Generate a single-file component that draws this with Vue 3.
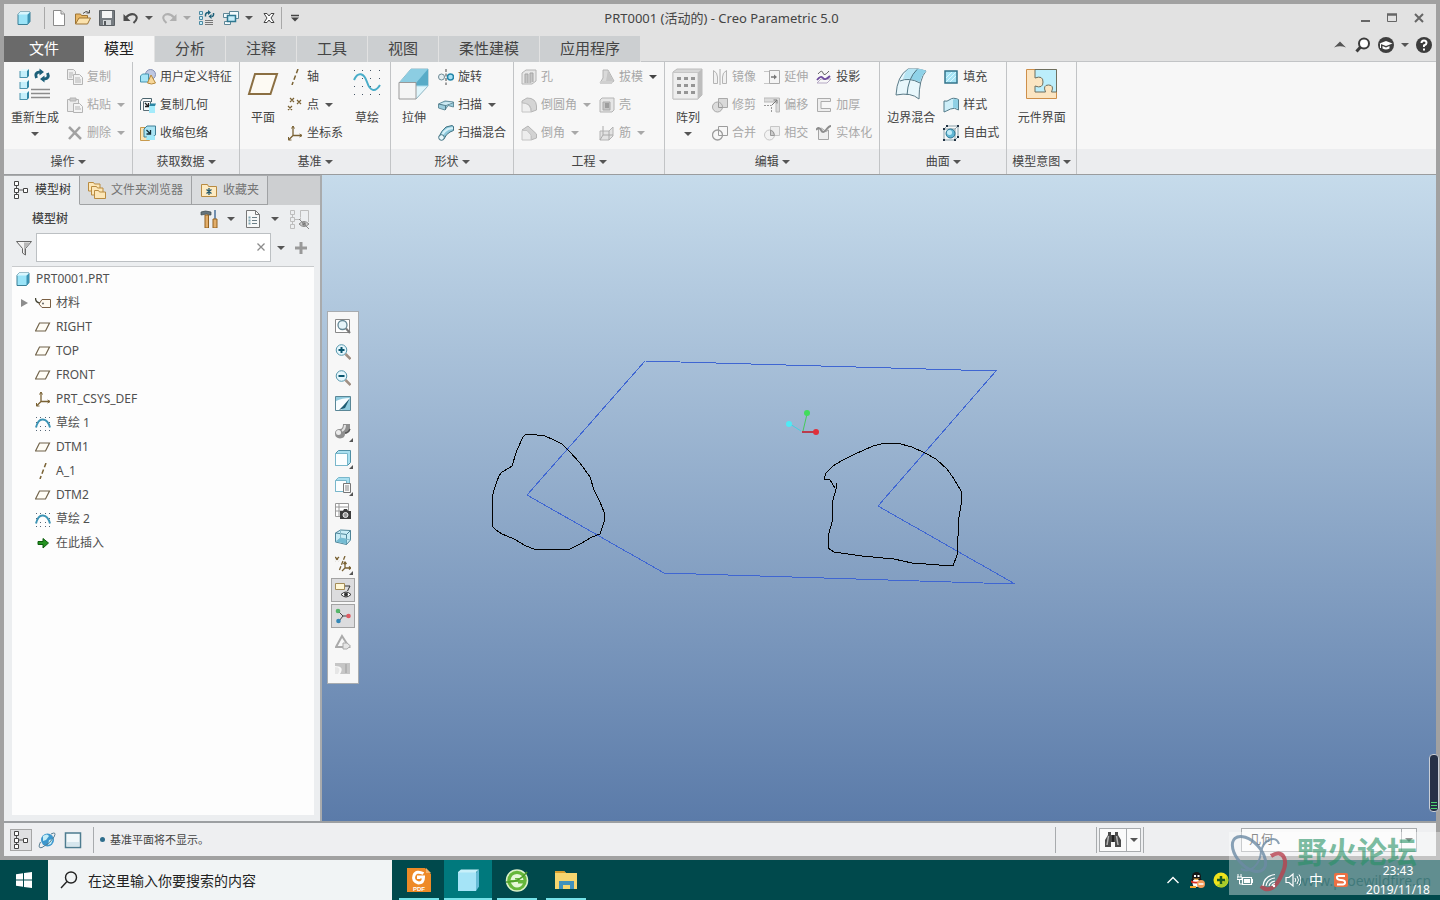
<template>
  <div class="desktop">
    <div class="window">
      <header class="title-bar">
        <div class="quick-access">
          <Icon name="cube" />
          <span class="divider"></span>
          <template v-for="item in quickItems" :key="item.icon">
            <button class="plain" :aria-label="item.label" :class="{ disabled: item.disabled }">
              <Icon :name="item.icon" />
              <span class="caret" v-if="item.menu"></span>
            </button>
          </template>
          <span class="divider last"></span>
          <button class="plain" aria-label="自定义"><Icon name="customize" /></button>
        </div>
        <h1>PRT0001 (活动的) - Creo Parametric 5.0</h1>
        <div class="window-buttons">
          <button class="plain" aria-label="最小化"><Icon name="minimize" /></button>
          <button class="plain" aria-label="最大化"><Icon name="maximize" /></button>
          <button class="plain" aria-label="关闭"><Icon name="close" /></button>
        </div>
      </header>

      <nav class="ribbon-tabs">
        <button
          v-for="tab in tabs"
          :key="tab"
          class="ribbon-tab"
          :class="{ file: tab === '文件', active: tab === activeTab }"
          @click="activeTab = tab"
        >
          {{ tab }}
        </button>
        <div class="ribbon-tools">
          <button class="plain" aria-label="折叠"><Icon name="collapse" /></button>
          <button class="plain" aria-label="搜索"><Icon name="lens" /></button>
          <button class="plain" aria-label="学习"><Icon name="learn" /></button>
          <span class="caret"></span>
          <button class="plain" aria-label="帮助"><Icon name="help" /></button>
        </div>
      </nav>

      <section class="ribbon">
        <div class="group" v-for="group in groups" :key="group.title">
          <div class="group-body">
            <template v-for="(part, i) in group.parts" :key="i">
              <button class="big" v-if="part.icon" :class="{ disabled: part.disabled }">
                <Icon :name="part.icon" :size="32" />
                <span class="big-label">{{ part.label }}</span>
                <span class="caret" v-if="part.menu"></span>
              </button>
              <div class="column" v-else>
                <button
                  class="small"
                  v-for="cmd in part"
                  :key="cmd.label"
                  :class="{ disabled: cmd.off, 'dark-caret': cmd.darkCaret }"
                >
                  <Icon :name="cmd.icon" />
                  <span>{{ cmd.label }}</span>
                  <span class="caret" v-if="cmd.menu"></span>
                </button>
              </div>
            </template>
          </div>
          <button class="group-title">{{ group.title }}<span class="caret"></span></button>
        </div>
        <div class="ribbon-rest"></div>
      </section>

      <main class="workspace">
        <aside class="navigator">
          <div class="nav-tabs">
            <button class="nav-tab active"><Icon name="tree" :size="18" />模型树</button>
            <button class="nav-tab"><Icon name="folders" :size="18" />文件夹浏览器</button>
            <button class="nav-tab"><Icon name="favorites" :size="18" />收藏夹</button>
          </div>
          <div class="nav-header">
            <h2>模型树</h2>
            <button class="plain" aria-label="设置"><Icon name="tools" :size="18" /></button>
            <span class="caret"></span>
            <button class="plain" aria-label="显示"><Icon name="list" :size="18" /></button>
            <span class="caret"></span>
            <button class="plain" aria-label="隐藏"><Icon name="treeHide" :size="22" /></button>
          </div>
          <div class="nav-filter">
            <Icon name="funnel" />
            <div class="filter-box">
              <input v-model="filter" type="text" aria-label="过滤" />
              <button class="plain clear" aria-label="清除" @click="filter = ''">
                <Icon name="clear" />
              </button>
            </div>
            <button class="plain slot" aria-label="过滤选项"><span class="caret"></span></button>
            <button class="plain slot" aria-label="添加"><Icon name="plus" /></button>
          </div>
          <ul class="tree">
            <li><Icon name="cube" /><span>PRT0001.PRT</span></li>
            <li v-for="node in nodes" :key="node.label" class="child">
              <span class="twisty"><i v-if="node.closed"></i></span>
              <Icon :name="node.icon" />
              <span>{{ node.label }}</span>
            </li>
          </ul>
        </aside>

        <div class="viewport">
          <svg class="scene">
            <g fill="none" shape-rendering="crispEdges">
              <path
                stroke="#3f66d2"
                d="M323 186 L674 196 L556 331 L693 409 L342 398 L205 320 Z"
              />
              <path
                stroke="#000"
                d="M204 259 L215 260 L223 261 L232 265 L240 269 L248 277 L258 288 L268 302 L272 315 L278 327 L282 337 L282 347 L278 359 L270 362 L258 369 L248 374 L235 374 L212 374 L204 371 L192 364 L180 359 L174 355 L170 351 L170 322 L174 309 L177 301 L180 297 L187 293 L190 291 L195 275 L201 262 Z"
              />
              <path
                stroke="#000"
                d="M515 308 L514 314 L511 325 L510 347 L507 358 L506 373 L512 377 L540 381 L572 384 L590 388 L617 390 L631 391 L635 380 L637 342 L639 330 L639 316 L632 304 L625 294 L614 284 L603 278 L590 272 L575 268 L563 268 L551 271 L533 279 L519 286 L511 291 L504 298 L502 304 L508 305 L513 313"
              />
            </g>
            <path stroke="#45cfe0" d="M468 249 L479 256" />
            <path stroke="#45c95c" d="M481 256 L485 239" />
            <path stroke="#b93c4c" stroke-width="2" d="M480 257 H494" />
            <circle cx="467" cy="249" r="3" fill="#4feaf5" />
            <circle cx="485" cy="238" r="3" fill="#41dd5c" />
            <circle cx="494" cy="257" r="3" fill="#e0303b" />
          </svg>
          <div class="view-tools">
            <button
              v-for="tool in viewTools"
              :key="tool.icon"
              :aria-label="tool.label"
              :class="{ pressed: tool.on, more: tool.menu }"
            >
              <Icon :name="tool.icon" />
            </button>
          </div>
        </div>
      </main>

      <footer class="status-bar">
        <button class="status-button pressed" aria-label="模型树"><Icon name="tree" :size="18" /></button>
        <button class="status-button" aria-label="浏览器"><Icon name="globe" :size="18" /></button>
        <button class="status-button" aria-label="全屏"><Icon name="screen" :size="18" /></button>
        <span class="bar"></span>
        <span class="bullet"></span>
        <p>基准平面将不显示。</p>
        <span class="bar spaced"></span>
        <span class="bar"></span>
        <div class="find">
          <button aria-label="查找"><Icon name="binoculars" :size="18" /></button>
          <button aria-label="查找选项"><span class="caret"></span></button>
        </div>
        <span class="bar"></span>
        <div class="pick">
          <select aria-label="选择过滤器">
            <option>几何</option>
          </select>
          <span class="pick-arrow"><span class="caret"></span></span>
        </div>
      </footer>
    </div>

    <div class="side-meter"><i></i><i></i><i></i></div>

    <div class="taskbar">
      <button class="start" aria-label="开始"><Icon name="windows" /></button>
      <label class="search">
        <Icon name="search" :size="18" />
        <input type="text" placeholder="在这里输入你要搜索的内容" />
      </label>
      <button class="task" aria-label="Foxit"><Icon name="foxit" :size="24" /></button>
      <button class="task current" aria-label="Creo"><Icon name="creo" :size="24" /></button>
      <button class="task" aria-label="浏览器"><Icon name="browser" :size="24" /></button>
      <button class="task" aria-label="资源管理器"><Icon name="explorer" :size="24" /></button>
      <div class="tray">
        <Icon name="trayUp" />
        <Icon name="penguin" />
        <Icon name="guard" />
        <Icon name="battery" />
        <Icon name="wifi" />
        <Icon name="volume" />
        <span class="ime">中</span>
        <Icon name="sogou" />
      </div>
      <div class="clock"><span>23:43</span><span>2019/11/18</span></div>
    </div>

    <div class="watermark">
      <svg viewBox="0 0 60 63" width="60" height="63" fill="none" stroke-width="3">
        <ellipse cx="20" cy="22" rx="12" ry="21" transform="rotate(-42 20 22)" stroke="#6d8ba5" />
        <path stroke="#6d8ba5" stroke-width="2" d="M50 12 C47 2 34 8 32 20 C31 32 22 42 12 37" />
        <path stroke="#b8424f" stroke-width="4" d="M42 24 C54 16 60 28 53 42 C48 54 40 62 32 54" />
      </svg>
      <div class="watermark-text"><b>野火论坛</b><span>www.proewildfire.cn</span></div>
    </div>
  </div>
</template>

<script setup>
import { ref, h } from 'vue'

const G = '#b4b4b4'
const T = '#7a6234'

const icons = {
  cube: `<path d="M2 4.500l2-2.500h10v9.500l-2.500 3H2z" fill="#9be4f8" stroke="#3b7f96"/><path d="M11.500 4.500L14 2v9.500l-2.500 3z" fill="#3b93b3"/><path d="M2 4.500l2-2.500h10l-2.500 2.500z" fill="#d9f6fd"/>`,
  newFile: `<path d="M2.500 .500h7.500l3.500 3.500v11.500h-11z" fill="#fff" stroke="#8b8b8b"/><path d="M10 .500V4h3.500" fill="#ddd" stroke="#8b8b8b"/>`,
  open: `<path d="M.500 14V4h5l1 1.500h6V8" fill="#e8b766" stroke="#9d7434"/><path d="M.500 14L4 8h11.500l-3 6z" fill="#fbe2ad" stroke="#9d7434"/><path d="M8 3.500Q11 0 14 2.500M14.500 0v3h-3" fill="none" stroke="#555"/>`,
  save: `<path d="M.500 .500h15v15H.500z" fill="#777d82" stroke="#5a5f63"/><path d="M3 1h10v7H3z" fill="#f5f5f5"/><path d="M4 10h8v5H4z" fill="#d2d6d8"/><path d="M5 11h2v4H5z" fill="#55595c"/>`,
  undo: `<path d="M3 7.500Q7 3 11.500 4.500Q16.500 7.500 10.500 13" fill="none" stroke="#4d4d4d" stroke-width="2"/><path d="M.500 4v7h7z" fill="#4d4d4d"/>`,
  redo: `<path d="M13 7.500Q9 3 4.500 4.500Q-.500 7.500 5.500 13" fill="none" stroke="#b0b0b0" stroke-width="2"/><path d="M15.500 4v7h-7z" fill="#b0b0b0"/>`,
  regenSmall: `<g fill="#c9effa" stroke="#4c8ba3"><path d="M.500 1.500h3v3h-3zM.500 6.500h3v3h-3zM.500 11.500h3v3h-3z"/></g><path d="M6 10.500h8M6 12.500h8M6 14.500h8" stroke="#777"/><path d="M6.500 6.500Q6 2.500 9.500 2.500M14.500 3Q15 6.500 12.500 6.500" fill="none" stroke="#1d6079" stroke-width="1.500"/><path d="M9 0v5l3-2.500zM12.500 4v5L9.500 6.500z" fill="#1d6079"/>`,
  windowsSwitch: `<path d="M6.500 1.500h9v7h-9zM.500 3.500h6v4h-6zM1.500 11.500h6v3h-6z" fill="#f4fbfd" stroke="#5f8797"/><path d="M4.500 5.500h8v6h-8z" fill="#c7eefa" stroke="#2f7891" stroke-width="1.500"/>`,
  closeWindow: `<path d="M3 3.500h3l2 2.500 2-2.500h3L10 8l3 4.500h-3L8 10l-2 2.500H3L6 8z" fill="#fff" stroke="#444"/>`,
  customize: `<path d="M1 5.500h8" stroke="#444" stroke-width="1.500"/><path d="M1 7.500h8l-4 4z" fill="#444"/>`,
  minimize: `<path d="M4 11h9" stroke="#666" stroke-width="2"/>`,
  maximize: `<path d="M3.500 4.500h9v7h-9z" fill="none" stroke="#666"/><path d="M3 4.500h10" stroke="#666" stroke-width="2.500"/>`,
  close: `<path d="M4 4l8 8M12 4l-8 8" stroke="#666" stroke-width="2"/>`,
  collapse: `<path d="M2 10.500l6-6 6 6q-6-2.500-12 0z" fill="#555"/>`,
  lens: `<circle cx="9" cy="6.500" r="5" fill="#fff" stroke="#3c3c3c" stroke-width="2"/><path d="M5.500 10L1.500 14.500" stroke="#3c3c3c" stroke-width="3"/>`,
  learn: `<circle cx="8" cy="8" r="8" fill="#3f3f3f"/><path d="M1.500 6.500L8 4l6.500 2.500L8 9z" fill="#fff"/><path d="M4.500 9v2.500q3.500 2 7 0V9L8 10.500z" fill="#fff"/><path d="M2.500 7v4" stroke="#fff"/>`,
  help: `<circle cx="8" cy="8" r="8" fill="#3c3c3c"/><path d="M5.500 6Q5.500 3.500 8 3.500T10.500 6Q10.500 7.500 8 8.500V10" fill="none" stroke="#fff" stroke-width="2"/><path d="M7 11.500h2v2H7z" fill="#fff"/>`,
  regen: `<g fill="#c4effb"><path d="M1 3h7v7H1zM1 14h7v7H1zM1 25h7v7H1z"/></g><path d="M1 3l2-2h7L8 3zM1 14l2-2h7l-2 2zM1 25l2-2h7l-2 2z" fill="#e6fafe"/><g fill="#2f86a5"><path d="M8 3l2-2v7l-2 2zM8 14l2-2v7l-2 2zM8 25l2-2v7l-2 2z"/></g><path d="M1 9.500h7M1 20.500h7M1 31.500h7M1 3v7M1 14v7M1 25v7" stroke="#4a93ad"/><path d="M12 21.500h19M12 25.500h19M12 29.500h19" stroke="#8c8c8c" stroke-width="1.500"/><path d="M17.500 10Q15 4.500 21 4" fill="none" stroke="#1d6079" stroke-width="3"/><path d="M28.500 5Q31 10.500 25 11" fill="none" stroke="#1d6079" stroke-width="3"/><path d="M20.500 .500v7L25 4zM25.500 7.500v7L21 11z" fill="#1d6079"/>`,
  copy: `<path d="M.500 .500h6l2 2v8h-8z" fill="#eee" stroke="${G}"/><path d="M2 4h4M2 6h4M2 8h3" stroke="${G}"/><path d="M6.500 5.500h6l3 3v7h-9z" fill="#f2f2f2" stroke="${G}"/><path d="M8 9h5M8 11h6M8 13h6" stroke="${G}"/>`,
  paste: `<path d="M.500 2.500h11v12H.500z" fill="#ececec" stroke="${G}"/><path d="M3 1h6v3H3z" fill="#ccc" stroke="${G}"/><path d="M6.500 6.500h6l3 3v6h-9z" fill="#f4f4f4" stroke="${G}"/><path d="M8 10h5M8 12h6" stroke="${G}"/>`,
  remove: `<path d="M2 2l12 12M13 2L2 14" stroke="#a2a2a2" stroke-width="2.500"/>`,
  udf: `<circle cx="10.500" cy="5.500" r="5" fill="#bfc8e2" stroke="#8490b5"/><path d="M.500 7l2-2h6v8h-8z" fill="#a5e4f6" stroke="#4693ae"/><path d="M11 6l4.500 8q-4 2-8 0z" fill="#f7d79a" stroke="#b78a3d"/>`,
  copyGeom: `<path d="M.500 13V4.500l2-3h9V5" fill="none" stroke="#4a646e"/><path d="M3.500 4.500h7v9h-7z" fill="#f5fbfc" stroke="#5b6e76"/><path d="M5 6l3 3M8.500 6v3.500H5" fill="none" stroke="#222" stroke-width="1.300"/><path d="M9 9h6v7H9z" fill="#a4ebfb"/><path d="M9 9l1.500-2.500H16L15 9z" fill="#2c87a5"/>`,
  shrink: `<path d="M.500 2.500h9v13h-9z" fill="#fce5b6" stroke="#c79a4e"/><path d="M4 4l3-3h8.500v9l-3 2H4z" fill="#a9e3f3" stroke="#3f7f96"/><path d="M6.500 5l3.500 3.500M10.500 5v4H6.500" fill="none" stroke="#15303a" stroke-width="1.300"/><path d="M7 11h8v4H6z" fill="#9fe9fa"/>`,
  plane: `<path d="M8 6h22l-6.500 20H2z" fill="#fdfaf3" stroke="#8b6f42" stroke-width="2"/>`,
  axis: `<path d="M11 0L5 16" stroke="${T}" stroke-width="1.500" stroke-dasharray="4.500 2.500"/>`,
  point: `<path d="M3 1l4 4M7 1L3 5M10 3l4 4M14 3l-4 4M1 9l4 4M5 9l-4 4" stroke="${T}" stroke-width="1.200"/>`,
  csys: `<path d="M6 1v9.500h9M6 10.500L1.500 15" fill="none" stroke="${T}" stroke-width="1.300"/><path d="M4.500 3.500L6 1l1.500 2.500M12.500 9l2.500 1.500-2.500 1.500M1.500 12v3h3" fill="none" stroke="${T}"/>`,
  sketch: `<g fill="#456"><path d="M3 2h1v1H3zM11 2h1v1h-1zM19 2h1v1h-1zM28 2h1v1h-1zM3 10h1v1H3zM11 10h1v1h-1zM19 10h1v1h-1zM28 10h1v1h-1zM3 18h1v1H3zM11 18h1v1h-1zM19 18h1v1h-1zM28 18h1v1h-1zM3 26h1v1H3zM11 26h1v1h-1zM19 26h1v1h-1zM28 26h1v1h-1z"/></g><path d="M3 12C7 3 13 5 16 14S24 25 29 17" fill="none" stroke="#49adc9" stroke-width="2"/>`,
  extrude: `<path d="M1 15L13 1h17v17L18 31z" fill="#dff5fb" stroke="#8fb6c4"/><path d="M13 1h17v17H18l-5-4z" fill="#58abc7"/><path d="M13 1v17h17M13 18L1 31" fill="none" stroke="#a9dced"/><path d="M1 15L13 1h17L18 15z" fill="#8ccde2"/><path d="M1 14.500h17V31H1z" fill="#f5f5f5" stroke="#999"/>`,
  revolve: `<path d="M8 0v16" stroke="#444" stroke-dasharray="3 1.500"/><circle cx="3.500" cy="8" r="3" fill="#e5eef2" stroke="#6c8a95"/><circle cx="12.500" cy="8" r="3" fill="#a8e1f5" stroke="#2385a8" stroke-width="1.500"/>`,
  sweep: `<path d="M.500 7L7 4l8.500 1v5L10 8.500 7 13l-6.500-2z" fill="#9ccddd" stroke="#648e9c"/><path d="M.500 7l7 1.500V13M7.500 8.500l8-3" fill="none" stroke="#557c89"/><path d="M2 6.500L8 5l7 .500-7 2.500z" fill="#cfeaf2"/>`,
  sweepBlend: `<path d="M1 12Q3 6 8 2l6-1.500 1.500 1v4L12 7Q8 9 6 14z" fill="#8ec9dc" stroke="#3f7080"/><path d="M4 10Q6 6 10 4l5-1" fill="none" stroke="#d4f0f8" stroke-width="2"/><circle cx="3.500" cy="12.500" r="2.800" fill="#e7f7fb" stroke="#3f7080"/>`,
  hole: `<path d="M1 4l4-3h10v11l-4 3H1z" fill="#e7e7e7" stroke="${G}"/><path d="M4 14V5h3v9M9 14V4h3v9" fill="#c6c6c6" stroke="#a5a5a5"/>`,
  round: `<path d="M1 4l5-3q9 0 9.500 8v4L10 15Q11 6 1 6z" fill="#d5d5d5" stroke="${G}"/><path d="M1 6q9 0 9 9H1z" fill="#efefef" stroke="#c4c4c4"/>`,
  chamfer: `<path d="M1 5l6-4 8.500 8v4L10 15V11L5 6z" fill="#d2d2d2" stroke="${G}"/><path d="M1 5.500h5l4 4.500v5H1z" fill="#ededed" stroke="#c4c4c4"/>`,
  draft: `<path d="M4 1h5l6 11-3 2H1l3-5z" fill="#d9d9d9" stroke="${G}"/><path d="M9 1L7 12h7z" fill="#c6c6c6"/><path d="M1 12h12v3H1z" fill="#d0d0d0"/>`,
  shell: `<path d="M1 3l2-2h12v12l-2 2H1z" fill="#e6e6e6" stroke="${G}"/><path d="M4 5h7v8H4z" fill="#c6c6c6" stroke="#aaa"/><path d="M6 6h4v5H6z" fill="#9d9d9d"/>`,
  rib: `<path d="M1 6h9l4-4v9l-4 4H1z" fill="#e3e3e3" stroke="${G}"/><path d="M4 1v9h10M1 15l3-5M10 6v9" fill="none" stroke="#aaa"/>`,
  pattern: `<path d="M1 4l4-3h25v26l-4 4H1z" fill="#d6d6d6" stroke="#bcbcbc"/><path d="M1 4.500h25V31H1z" fill="#eee" stroke="#c6c6c6"/><path d="M26 4.500L30 1v26l-4 4z" fill="#bdbdbd"/><g fill="#959595"><path d="M5 9h4v3H5zM12 9h4v3h-4zM19 9h4v3h-4zM5 16h4v3H5zM12 16h4v3h-4zM19 16h4v3h-4zM5 23h4v3H5zM12 23h4v3h-4zM19 23h4v3h-4z"/></g>`,
  mirror: `<path d="M1.500 1.500q4 2 4 6.500v6.500h-4zM14.500 1.500q-4 2-4 6.500v6.500h4z" fill="#f1f1f1" stroke="${G}"/><path d="M8 0v16" stroke="#aaa"/>`,
  trim: `<path d="M6.500 1.500h9v9h-9z" fill="#dadada" stroke="#a9a9a9"/><circle cx="5.500" cy="10" r="5" fill="#dcdcdc" stroke="#a9a9a9"/><path d="M6.500 5.500v5h4" fill="none" stroke="#999"/>`,
  merge: `<path d="M6.500 5V1.500h9v9h-5" fill="none" stroke="#9c9c9c"/><circle cx="5.500" cy="10" r="5" fill="none" stroke="#9c9c9c" stroke-width="1.300"/><path d="M6.500 5.500v5h4" fill="none" stroke="#9c9c9c"/>`,
  extend: `<path d="M0 2.500h6M0 14.500h6" stroke="#c6c6c6"/><path d="M5.500 1.500h10v13h-10z" fill="#f4f4f4" stroke="#a9a9a9"/><path d="M7 8h4" stroke="#777" stroke-width="1.500"/><path d="M10 5.500L13 8l-3 2.500z" fill="#777"/>`,
  offset: `<path d="M0 1h15.500v14H12V5H0z" fill="#dcdcdc" stroke="#b9b9b9"/><path d="M0 8.500h7.500V15" fill="none" stroke="#999" stroke-dasharray="2 1"/><path d="M8 8l5-5M9.500 3H13v3.500" fill="none" stroke="#777"/>`,
  intersect: `<path d="M6.500 1.500h9v9h-9z" fill="#eee" stroke="#c7c7c7"/><circle cx="5.500" cy="10" r="5" fill="#f3f3f3" stroke="#c7c7c7"/><path d="M6.500 5v5.500h4Q10 6 6.500 5z" fill="#ccc" stroke="#999"/>`,
  project: `<path d="M1 14l4-4h10l-4 4z" fill="#f7f7f7" stroke="#b5a9c4"/><path d="M2 5q4-5 5-1t6-2" fill="none" stroke="#666"/><path d="M1 11q4-5 6-2t7-2" fill="none" stroke="#6d4a9c" stroke-width="1.800"/>`,
  thicken: `<path d="M14.500 1.500h-13v13h13v-3H5v-7h9.500z" fill="#eee" stroke="#acacac"/>`,
  solidify: `<path d="M2.500 4v10.500h10V5Q10 8 8 5T2.500 4z" fill="#eee" stroke="#a5a5a5"/><path d="M0 5q3-4 5 0t5 0 5-4" fill="none" stroke="#8c8c8c" stroke-width="2"/>`,
  boundary: `<path d="M1 27Q2 8 13 1q11-1 18 2-7 8-7 28-8-7-23-4z" fill="#e8f7fc" stroke="#5b7b88"/><path d="M13 1q11-1 18 2-5 5-6 11-6-4-17-3 2-7 5-10z" fill="#b5e4f3"/><path d="M22 1q6 0 9 2-5 5-6 11l-9-3q2-6 6-10z" fill="#8fd2e8"/><path d="M12 27Q13 10 22 1.500M5 13q9-4 20 2" fill="none" stroke="#4f7482"/>`,
  fill: `<path d="M2 2h12v12H2z" fill="#a6e4f5" stroke="#34748b" stroke-width="1.500"/><path d="M3 9l6-6M3 13L13 3M7 13l6-6" stroke="#d9f7ff"/>`,
  style: `<path d="M1 4q3 1 6-1.500t8.500 0v10.500q-4-3-8-1t-6.500 3z" fill="#cdeef8" stroke="#527a89"/><path d="M10 2.500q3-1 5 .500v9q-2-2-5-1z" fill="#8fd0e5"/>`,
  freestyle: `<path d="M1 4l3-3h11v11l-3 3H1zM1 4h11v11M12 4l3-3" fill="none" stroke="#8ba1aa"/><circle cx="7.500" cy="8.500" r="4.500" fill="#61b6d4" stroke="#2b7692"/><circle cx="6.500" cy="7.500" r="2.500" fill="#c2edf9"/><path d="M0 3h2v2H0zM3 0h2v2H3zM14 0h2v2h-2zM11 14h2v2h-2zM0 14h2v2H0zM14 11h2v2h-2z" fill="#234"/>`,
  interface: `<path d="M.500 1.500h30v29H.500z" fill="#fbe5c2" stroke="#ce8f4a"/><path d="M9 1.500h21.500V24h-5q3-7-3-7t-3 7H9v-6q8 3 8-4t-8-4z" fill="#bceefb" stroke="#6f6f5e"/>`,
  tree: `<path d="M4.500 2v14M4.500 9h8" stroke="#555" fill="none"/><g fill="#fff" stroke="#444"><path d="M2.500 .500h4v4h-4zM2.500 7.500h4v4h-4zM2.500 13.500h4v4h-4zM11.500 7.500h4v4h-4z"/></g>`,
  folders: `<g fill="#fde7b8" stroke="#b98b41"><path d="M.500 10V1.500h5l1 1.500H12v7z"/><path d="M3.500 14V5.500h5l1 1.500H15v7z"/><path d="M6.500 17.500V9.500h4l1 1.500h6v6.500z"/></g>`,
  favorites: `<path d="M1.500 15.500v-12h6l1 2h8v10z" fill="#fdebc3" stroke="#b98b41"/><path d="M9 7v7M6.500 8.500l5 4M11.500 8.500l-5 4" stroke="#25596d" stroke-width="1.300"/>`,
  tools: `<path d="M1 2q4-2 10 0v3H8.500L7 4 1 5z" fill="#66747c" stroke="#3e4a50" stroke-width=".700"/><path d="M5 5h3.500v13H5z" fill="#e2ae6b" stroke="#93601f"/><path d="M14 0h2v9h-2z" fill="#7390b0"/><path d="M13 9h4v9h-4z" fill="#e2ae6b" stroke="#93601f"/>`,
  list: `<path d="M2.500 .500h9l4 4v13h-13z" fill="#f7f8f8" stroke="#777"/><path d="M11.500 .500v4h4" fill="none" stroke="#777"/><path d="M8 7.500h5M8 10.500h5M8 13.500h5" stroke="#6c7f87"/><path d="M4.500 6.500h2v2h-2zM4.500 9.500h2v2h-2zM4.500 12.500h2v2h-2z" fill="#7fa3b0"/>`,
  treeHide: `<g fill="none" stroke="#bdbdbd"><path d="M2.500 2.500h4v4h-4zM2.500 9.500h4v4h-4zM2.500 16.500h4v4h-4zM12.500 9V2.500h8V14M7 11.500h5.500v-2M4.500 6.500v3M4.500 13.500v3"/></g><path d="M11 16q5-5 10 0-5 5-10 0z" fill="#ccc" stroke="#888"/><circle cx="16" cy="16" r="1.800" fill="#777"/><path d="M11 11l10 10" stroke="#888"/>`,
  funnel: `<path d="M.500 1.500h15l-6 7v6.500l-3-2V8.500z" fill="#f3f3f3" stroke="#666"/><path d="M8 2.500h6l-5 6v5H8z" fill="#b8b8b8"/>`,
  clear: `<path d="M4.500 4.500l7 7M11.500 4.500l-7 7" stroke="#8b8b8b" stroke-width="1.300"/>`,
  plus: `<path d="M8 2v12M2 8h12" stroke="#999" stroke-width="3"/>`,
  material: `<path d="M.500 3q0 5 5.500 5" fill="none" stroke="#443" stroke-width="1.300"/><path d="M4 9l3-4.500h8.500v8H7z" fill="#fffaf0" stroke="#7a5f43"/><circle cx="8" cy="8.500" r="1" fill="#666"/>`,
  datum: `<path d="M4.500 4h10l-4 8H.500z" fill="#fffdf6" stroke="#71634a" stroke-width="1.200"/>`,
  curve: `<path d="M1 12.500Q3 4 8 4.500T15 12.500" fill="none" stroke="#3c94b5" stroke-width="2"/><g fill="#567"><path d="M1 2h1v1H1zM5 2h1v1H5zM10 2h1v1h-1zM14 2h1v1h-1zM1 7h1v1H1zM14 7h1v1h-1zM5 11h1v1H5zM10 11h1v1h-1zM1 15h1v1H1zM5 15h1v1H5zM10 15h1v1h-1zM14 15h1v1h-1z"/></g>`,
  insert: `<path d="M3 6.500h5V3.500L13.500 8 8 13v-3.500H3z" fill="#249321" stroke="#0d5c0d"/>`,
  zoomFit: `<path d="M.500 1.500h14v13H.500z" fill="#fff" stroke="#888"/><circle cx="7.500" cy="7" r="4.500" fill="#e6f5fa" stroke="#648795" stroke-width="1.300"/><path d="M11 10.500l4 4.500" stroke="#777" stroke-width="2"/>`,
  zoomIn: `<circle cx="6.500" cy="6" r="5.300" fill="#e5f6fc" stroke="#5798ad"/><path d="M6.500 3v6M3.500 6h6" stroke="#0a566f" stroke-width="2"/><path d="M10.500 10l5 5" stroke="#a08f83" stroke-width="2.500"/>`,
  zoomOut: `<circle cx="6.500" cy="6" r="5.300" fill="#e5f6fc" stroke="#5798ad"/><path d="M3.500 6h6" stroke="#0a566f" stroke-width="2"/><path d="M10.500 10l5 5" stroke="#a08f83" stroke-width="2.500"/>`,
  repaint: `<path d="M.500 .500h15v14H.500z" fill="#8fcbde" stroke="#5a8797"/><path d="M1 14V5q6-3 14-3-4 9-9 12z" fill="#f8fdff"/><path d="M15 2l-7 8-4 4 6-2z" fill="#1d5d74"/>`,
  shading: `<path d="M8 1h7v7q-2 3-5 3 0 4-5 4.500Q0 15 0 10.500T5 6q3 0 3-5z" fill="#8f8f8f"/><circle cx="3.500" cy="9.500" r="2.500" fill="#ececec"/><path d="M10 2q0 4-3 6" fill="none" stroke="#e2e2e2" stroke-width="2"/><path d="M15 6q-2 4-5 4" fill="none" stroke="#555" stroke-width="1.500"/>`,
  views: `<path d="M.500 3.500l3-3h12v12l-3 3H.500z" fill="#a9dfef" stroke="#4f8fa5"/><path d="M.500 3.500h12v12H.500z" fill="#fbfeff" stroke="#79b7cb"/>`,
  viewManager: `<path d="M.500 3.500l3-3h11v12l-3 2H.500z" fill="#a9dfef" stroke="#79b7cb"/><path d="M.500 3.500h11v11H.500z" fill="#fbfeff" stroke="#79b7cb"/><path d="M8.500 6.500h7v9h-7z" fill="#fafafa" stroke="#777"/><path d="M10 9h4M10 11h4M10 13h4" stroke="#888"/>`,
  capture: `<path d="M.500 .500h13v13H.500zM0 4h14M0 8h14M4 0v14" fill="#fff" stroke="#999"/><path d="M5 8h3l1-2h3l1 2h3v8H5z" fill="#3c3c3c"/><circle cx="10.500" cy="12" r="2.500" fill="#999" stroke="#eee"/>`,
  perspective: `<path d="M.500 4l5-3 10 .500V11l-4 4.500L.500 13z" fill="#c8ecf6" stroke="#4f8599"/><path d="M.500 4l11 1.500 4-4M11.500 5.500v10" fill="none" stroke="#4f8599"/><path d="M5.500 1v8L.500 13M5.500 9l10 2" fill="none" stroke="#86b9ca"/><path d="M1 12.500L5.500 9l6 1v5z" fill="#74bcd3"/>`,
  datums: `<path d="M0 1l4 4M4 1L0 5M10 0L4 15" stroke="${T}" stroke-width="1.300" stroke-dasharray="4 1.500"/><path d="M10 6v6h6M10 12l-3 3M8.500 8L10 6l1.500 2M14 10.500l2 1.500-2 1.500" fill="none" stroke="${T}" stroke-width="1.300"/>`,
  annotations: `<path d="M.500 1.500h9v6h-9z" fill="#fff7d7" stroke="#a48c57"/><path d="M10 4h5l-2.500 5" fill="none" stroke="#333"/><path d="M6 12.500q5-5 10 0-5 5-10 0z" fill="#fff" stroke="#333"/><circle cx="11" cy="12.500" r="2" fill="#333"/>`,
  spin: `<path d="M3 3l5 5-4 5M8 8h6" fill="none" stroke="#444"/><circle cx="3" cy="3" r="2.300" fill="#55b66a"/><circle cx="3.500" cy="13" r="2.300" fill="#3387b7"/><circle cx="13.500" cy="8" r="2.300" fill="#df5a62"/>`,
  simulate: `<path d="M7 2l7 11H1z" fill="none" stroke="#aaa" stroke-width="2"/><path d="M8 9h4l3.500 3-3.500 3H8z" fill="#e5e5e5" stroke="#aaa"/>`,
  section: `<path d="M0 3h15v11H5Q10 6 0 6z" fill="#c6c6c6"/><path d="M0 7q7 0 3 7H0z" fill="#e6e6e6"/><path d="M11 4v9" stroke="#b2b2b2" stroke-width="2"/>`,
  globe: `<circle cx="9.500" cy="9" r="6.500" fill="#3d97cd"/><path d="M5 5q4-3 6 0l-3 4-3 1zM11 9l4-1-2 5-3 1z" fill="#c4edf7"/><path d="M13 3Q19 0 16 6T4 16.500Q-1 18 2.500 11" fill="none" stroke="#567d93"/>`,
  screen: `<path d="M1.500 2h15v14.500h-15z" fill="#f2f8fa" stroke="#4e7c90" stroke-width="1.500"/><path d="M3 11h12v4H3z" fill="#d6e6ed"/>`,
  binoculars: `<path d="M4 1h3v3h4V1h3v3l3 5v7h-6v-5H7v5H1V9l3-5z" fill="#4b4b4b"/><path d="M4.500 5L3 14M12.500 5l1.500 9" stroke="#b5b5b5" stroke-width="1.500"/><path d="M8 4h2v7H8z" fill="#222"/>`,
  windows: `<path d="M0 2.200L7 1.200V7.500H0zM8 1L16 0v7.500H8zM0 8.500h7v6.300L0 13.800zM8 8.500h8V16l-8-1z" fill="#fff"/>`,
  search: `<circle cx="11" cy="6.500" r="5.500" fill="none" stroke="#222" stroke-width="1.400"/><path d="M7 10.500L1 17" stroke="#222" stroke-width="1.400"/>`,
  foxit: `<path d="M0 0h18l6 6v18H0z" fill="#ee8a27"/><path d="M19 0l5 5h-5z" fill="#f5b36c"/><path d="M16.500 5.500Q9 2 7 7.500t4.500 7.500q5 0 5-6h-5v2" fill="none" stroke="#fff" stroke-width="3"/><text x="6" y="23" font-size="6" font-weight="bold" fill="#fff" font-family="Liberation Sans, sans-serif">PDF</text>`,
  creo: `<path d="M2 4l3-2.500h18L20 4v19H2z" fill="#c8f0fa"/><path d="M2 4.500h18V23H2z" fill="#a5e4f7"/><path d="M20 4.500l3-3v17L20 23z" fill="#66bbd5"/>`,
  browser: `<circle cx="12" cy="12.500" r="10.500" fill="#66b73b" stroke="#dcf2ca" stroke-width="1.500"/><path d="M5.500 12Q6.500 6 12 6t6.500 6z" fill="#e6f7d8"/><path d="M10 10h4v1.500h-4z" fill="#66b73b"/><path d="M5.500 14H13v1.500h5Q16 19.500 12 19.500T5.500 14z" fill="#e6f7d8"/><path d="M1 14Q14 15 22 4" fill="none" stroke="#4f9e2b" stroke-width="1.500"/>`,
  explorer: `<path d="M1 3h9l2 2h11v16H1z" fill="#f6d66f"/><path d="M1 3h9l2 2H1z" fill="#d99e2d"/><path d="M5 13h15v8h-4v-4H9v4H5z" fill="#4092bd"/>`,
  trayUp: `<path d="M2.500 11L8 5.500l5.500 5.500" fill="none" stroke="#fff" stroke-width="1.400"/>`,
  penguin: `<ellipse cx="7.500" cy="10" rx="5.500" ry="5.500" fill="#161616"/><circle cx="7.500" cy="4.500" r="4.500" fill="#161616"/><ellipse cx="7" cy="11" rx="3.500" ry="4" fill="#fff"/><path d="M5 3h2v2H5zM8.500 3h2v2h-2z" fill="#fff"/><path d="M4 6.500h7L7.500 8z" fill="#f2a52a"/><path d="M2 8.500q5 2.500 10 0v2q-5 2-10 0z" fill="#d92a20"/><circle cx="12" cy="12" r="4" fill="#f49b59"/><path d="M9.500 12h5" stroke="#fff" stroke-width="1.500"/><path d="M1 14h6v2H1z" fill="#f2a52a"/>`,
  guard: `<circle cx="8" cy="8" r="7.500" fill="#f1e31c"/><path d="M3 13Q12 12 14 4q3 7-3 11-4 1-8-2z" fill="#a7cc2b"/><path d="M8 4v8M4 8h8" stroke="#1a5a24" stroke-width="2.500"/>`,
  battery: `<path d="M5.500 5.500h9v7h-9zM15.500 7v4" fill="none" stroke="#fff" stroke-width="1.200"/><path d="M7 7h6v4H7z" fill="#fff"/><path d="M1 2v3M4 2v3M0 5h5v2.500H0zM2.500 7v5H5" fill="none" stroke="#fff"/>`,
  wifi: `<path d="M2 14Q3 4 14 2.500M5 14q1-7 9-8M8 14q.500-4 6-5M11 14q0-2 3-2.500" fill="none" stroke="#fff" stroke-width="1.200"/><circle cx="13" cy="14" r="1.200" fill="#fff"/>`,
  volume: `<path d="M1 5.500h3L8 2v12L4 10.500H1z" fill="none" stroke="#fff" stroke-width="1.200"/><path d="M10 6q1.500 2 0 4M12 4q3 4 0 8M14 2.500q4 5.500 0 11" fill="none" stroke="#fff"/>`,
  sogou: `<rect x="1" y="1" width="14" height="14" rx="2" fill="#ec7043"/><path d="M12 4H6Q3.500 4 4 6t4 2 4 2-2 2.500H4" fill="none" stroke="#fff" stroke-width="2"/>`,
}

const Icon = (props) =>
  h('svg', {
    class: 'icon',
    width: props.size,
    height: props.size,
    viewBox: `0 0 ${props.size} ${props.size}`,
    innerHTML: icons[props.name],
  })
Icon.props = { name: String, size: { type: Number, default: 16 } }

const activeTab = ref('模型')
const filter = ref('')

const tabs = ['文件', '模型', '分析', '注释', '工具', '视图', '柔性建模', '应用程序']

const quickItems = [
  { icon: 'newFile', label: '新建' },
  { icon: 'open', label: '打开' },
  { icon: 'save', label: '保存' },
  { icon: 'undo', label: '撤消', menu: true },
  { icon: 'redo', label: '重做', menu: true, disabled: true },
  { icon: 'regenSmall', label: '重新生成' },
  { icon: 'windowsSwitch', label: '窗口', menu: true },
  { icon: 'closeWindow', label: '关闭窗口' },
]

const groups = [
  {
    title: '操作',
    parts: [
      { icon: 'regen', label: '重新生成', menu: true },
      [
        { icon: 'copy', label: '复制', off: true },
        { icon: 'paste', label: '粘贴', off: true, menu: true },
        { icon: 'remove', label: '删除', off: true, menu: true },
      ],
    ],
  },
  {
    title: '获取数据',
    parts: [
      [
        { icon: 'udf', label: '用户定义特征' },
        { icon: 'copyGeom', label: '复制几何' },
        { icon: 'shrink', label: '收缩包络' },
      ],
    ],
  },
  {
    title: '基准',
    parts: [
      { icon: 'plane', label: '平面' },
      [
        { icon: 'axis', label: '轴' },
        { icon: 'point', label: '点', menu: true },
        { icon: 'csys', label: '坐标系' },
      ],
      { icon: 'sketch', label: '草绘' },
    ],
  },
  {
    title: '形状',
    parts: [
      { icon: 'extrude', label: '拉伸' },
      [
        { icon: 'revolve', label: '旋转' },
        { icon: 'sweep', label: '扫描', menu: true },
        { icon: 'sweepBlend', label: '扫描混合' },
      ],
    ],
  },
  {
    title: '工程',
    parts: [
      [
        { icon: 'hole', label: '孔', off: true },
        { icon: 'round', label: '倒圆角', off: true, menu: true },
        { icon: 'chamfer', label: '倒角', off: true, menu: true },
      ],
      [
        { icon: 'draft', label: '拔模', off: true, menu: true, darkCaret: true },
        { icon: 'shell', label: '壳', off: true },
        { icon: 'rib', label: '筋', off: true, menu: true },
      ],
    ],
  },
  {
    title: '编辑',
    parts: [
      { icon: 'pattern', label: '阵列', menu: true },
      [
        { icon: 'mirror', label: '镜像', off: true },
        { icon: 'trim', label: '修剪', off: true },
        { icon: 'merge', label: '合并', off: true },
      ],
      [
        { icon: 'extend', label: '延伸', off: true },
        { icon: 'offset', label: '偏移', off: true },
        { icon: 'intersect', label: '相交', off: true },
      ],
      [
        { icon: 'project', label: '投影' },
        { icon: 'thicken', label: '加厚', off: true },
        { icon: 'solidify', label: '实体化', off: true },
      ],
    ],
  },
  {
    title: '曲面',
    parts: [
      { icon: 'boundary', label: '边界混合' },
      [
        { icon: 'fill', label: '填充' },
        { icon: 'style', label: '样式' },
        { icon: 'freestyle', label: '自由式' },
      ],
    ],
  },
  { title: '模型意图', parts: [{ icon: 'interface', label: '元件界面' }] },
]

const nodes = [
  { icon: 'material', label: '材料', closed: true },
  { icon: 'datum', label: 'RIGHT' },
  { icon: 'datum', label: 'TOP' },
  { icon: 'datum', label: 'FRONT' },
  { icon: 'csys', label: 'PRT_CSYS_DEF' },
  { icon: 'curve', label: '草绘 1' },
  { icon: 'datum', label: 'DTM1' },
  { icon: 'axis', label: 'A_1' },
  { icon: 'datum', label: 'DTM2' },
  { icon: 'curve', label: '草绘 2' },
  { icon: 'insert', label: '在此插入' },
]

const viewTools = [
  { icon: 'zoomFit', label: '重新调整' },
  { icon: 'zoomIn', label: '放大' },
  { icon: 'zoomOut', label: '缩小' },
  { icon: 'repaint', label: '重画' },
  { icon: 'shading', label: '显示样式', menu: true },
  { icon: 'views', label: '已保存方向', menu: true },
  { icon: 'viewManager', label: '视图管理器', menu: true },
  { icon: 'capture', label: '捕捉' },
  { icon: 'perspective', label: '透视图' },
  { icon: 'datums', label: '基准显示', menu: true },
  { icon: 'annotations', label: '注释显示', on: true },
  { icon: 'spin', label: '旋转中心', on: true },
  { icon: 'simulate', label: '仿真' },
  { icon: 'section', label: '截面' },
]
</script>

<style>
body {
  margin: 0;
}
</style>

<style scoped>
.desktop {
  position: relative;
  display: flex;
  flex-direction: column;
  min-height: 100vh;
  font-family: 'Noto Sans', 'Noto Sans CJK SC', sans-serif;
  font-size: 12px;
  line-height: 16px;
  color: #444;
}

.desktop * {
  box-sizing: border-box;
}

button,
input,
select {
  font: inherit;
  color: inherit;
  margin: 0;
  padding: 0;
  border: none;
  background: none;
  white-space: nowrap;
}

.icon {
  flex: none;
  display: block;
}

.caret {
  flex: none;
  width: 0;
  height: 0;
  border: 4px solid transparent;
  border-top: 4px solid #555;
  border-bottom: none;
}

.disabled {
  color: #a8a8a8;
}

.disabled .caret {
  border-top-color: #a8a8a8;
}

.disabled.dark-caret .caret {
  border-top-color: #444;
}

.plain {
  display: flex;
  align-items: center;
  gap: 6px;
}

.window {
  flex: 1;
  display: flex;
  flex-direction: column;
  border: 4px solid #a1a1a1;
  background: #eceef0;
}

/* title bar */
.title-bar {
  display: grid;
  grid-template-columns: 1fr auto 1fr;
  align-items: center;
  height: 32px;
  padding: 0 9px 4px 12px;
  background: #e2e2e2;
}

.title-bar h1 {
  margin: 0;
  font-size: 13px;
  font-weight: normal;
}

.quick-access {
  display: flex;
  align-items: center;
  gap: 8px;
}

.divider {
  width: 1px;
  height: 22px;
  margin: 0 -2px 0 4px;
  background: #a8a8a8;
}

.divider.last {
  margin: 0 0 0 -4px;
}

.window-buttons {
  display: flex;
  justify-content: flex-end;
  gap: 11px;
}

/* ribbon */
.ribbon-tabs {
  display: flex;
  height: 26px;
  background: #e2e2e2;
  border-bottom: 1px solid #c2c4c6;
}

.ribbon-tab {
  height: 26px;
  padding: 0 20px 2px;
  border-right: 1px solid #e2e2e2;
  background: #cccfd1;
  font-size: 15px;
  line-height: 20px;
}

.ribbon-tab.file {
  padding: 0 25px 2px;
  border: none;
  background: #6a6a6a;
  color: #fff;
}

.ribbon-tab.active {
  background: #f7f7f7;
  color: #222;
}

.ribbon-tools {
  display: flex;
  align-items: center;
  gap: 7px;
  margin-left: auto;
  padding: 0 4px 7px 0;
}

.ribbon {
  display: flex;
  background: #f7f7f7;
  border-bottom: 1px solid #9a9c9e;
}

.group {
  display: flex;
  flex-direction: column;
  border-right: 1px solid #c2c4c6;
}

.group-body {
  display: flex;
  justify-content: center;
  gap: 8px;
  height: 87px;
  padding: 0 7px;
}

.column {
  padding-top: 1px;
}

.big {
  display: flex;
  flex-direction: column;
  align-items: center;
  min-width: 32px;
  padding-top: 6px;
}

.big-label {
  margin: 10px 0 6px;
}

.small {
  display: flex;
  align-items: center;
  gap: 4px;
  height: 28px;
}

.small .caret {
  margin-left: 2px;
}

.group-title {
  display: flex;
  align-items: center;
  justify-content: center;
  gap: 3px;
  height: 25px;
  padding: 0 5px;
  background: #ecedef;
}

.ribbon-rest {
  flex: 1;
  background: linear-gradient(#f7f7f7 87px, #ecedef 87px);
}

/* navigator */
.workspace {
  flex: 1;
  display: flex;
}

.navigator {
  display: flex;
  flex-direction: column;
  width: 318px;
  border-right: 2px solid #a9abad;
}

.nav-tabs {
  display: flex;
  height: 30px;
  background: #cdcfd1;
  border-top: 1px solid #a9abad;
}

.nav-tab {
  display: flex;
  align-items: center;
  gap: 5px;
  padding: 0 8px;
  border-right: 1px solid #a0a2a4;
  border-bottom: 1px solid #a0a2a4;
  background: #dadcde;
  color: #747474;
}

.nav-tab.active {
  border-bottom-color: #eceef0;
  background: #eceef0;
  color: #333;
}

.nav-header {
  display: flex;
  align-items: center;
  gap: 9px;
  height: 28px;
  padding: 0 10px 0 28px;
}

.nav-header h2 {
  flex: 1;
  margin: 0;
  font-size: 12px;
  font-weight: 500;
}

.nav-filter {
  display: flex;
  align-items: center;
  height: 29px;
  padding: 0 9px 0 12px;
}

.filter-box {
  position: relative;
  flex: 1;
  height: 29px;
  margin-left: 4px;
}

.filter-box input {
  width: 100%;
  height: 100%;
  padding: 0 24px 0 6px;
  border: 1px solid #bcc0c3;
  background: #fff;
}

.clear {
  position: absolute;
  top: 6px;
  right: 2px;
}

.slot {
  width: 20px;
  justify-content: center;
}

.tree {
  flex: 1;
  margin: 4px 6px 6px 8px;
  padding: 0;
  list-style: none;
  border-top: 1px solid #c8cacc;
  background: #fdfdfd;
  color: #505050;
}

.tree li {
  display: flex;
  align-items: center;
  gap: 5px;
  height: 24px;
  padding-left: 3px;
}

.twisty {
  width: 15px;
  padding-left: 6px;
}

.twisty i {
  display: block;
  width: 0;
  border: 4px solid transparent;
  border-left: 7px solid #8d8d8d;
  border-right: none;
}

/* graphics area */
.viewport {
  position: relative;
  flex: 1;
  background: linear-gradient(#c6dbeb, #5b7ba9);
}

.scene {
  position: absolute;
  width: 100%;
  height: 100%;
}

.view-tools {
  position: absolute;
  top: 136px;
  left: 5px;
  display: flex;
  flex-direction: column;
  align-items: center;
  gap: 2px;
  padding: 2px 3px 3px;
  border: 1px solid #a8acb0;
  background: #f7f7f7;
}

.view-tools button {
  position: relative;
  display: flex;
  align-items: center;
  justify-content: center;
  width: 24px;
  height: 24px;
  border: 1px solid transparent;
}

.view-tools .pressed {
  border-color: #a3a3a3;
  background: #dcdcde;
}

.view-tools .more {
  height: 25px;
}

.view-tools .more::after {
  content: '';
  position: absolute;
  right: 1px;
  bottom: 0;
  border: 2px solid #555;
  border-top-color: transparent;
  border-left-color: transparent;
}

/* status bar */
.status-bar {
  display: flex;
  align-items: center;
  height: 35px;
  padding: 0 19px 0 6px;
  border-top: 2px solid #9c9fa2;
  background: #eeeff1;
}

.status-button {
  display: flex;
  align-items: center;
  justify-content: center;
  width: 22px;
  height: 22px;
  margin-right: 4px;
  border: 1px solid transparent;
}

.status-button.pressed {
  border-color: #a6a6a6;
  background: #dfe0e2;
}

.bar {
  width: 1px;
  height: 26px;
  margin: 0 3px 0 5px;
  background: #a8abae;
}

.spaced {
  margin: 0 35px 0 auto;
}

.bullet {
  width: 5px;
  height: 5px;
  margin: 0 5px 0 3px;
  border-radius: 50%;
  background: #2f6e8d;
}

.status-bar p {
  margin: 0;
  font-size: 11px;
}

.find {
  display: flex;
  width: 42px;
  height: 24px;
  margin: 0 -3px 0 -1px;
  border: 1px solid #a8abae;
  background: #fafafa;
}

.find button {
  display: flex;
  align-items: center;
  justify-content: center;
  flex: 1 0 auto;
}

.find button:first-child {
  width: 27px;
  flex: none;
  border-right: 1px solid #a8abae;
}

.pick {
  position: relative;
  width: 176px;
  height: 24px;
  margin-left: 94px;
}

.pick select {
  width: 100%;
  height: 100%;
  padding-left: 7px;
  border: 1px solid #a8abae;
  border-radius: 0;
  background: #fafafa;
  appearance: none;
}

.pick-arrow {
  position: absolute;
  top: 0;
  right: 0;
  display: flex;
  align-items: center;
  justify-content: center;
  width: 16px;
  height: 24px;
  border: 1px solid #a8abae;
  pointer-events: none;
}

.side-meter {
  position: absolute;
  right: 1px;
  bottom: 88px;
  display: flex;
  flex-direction: column;
  justify-content: flex-end;
  align-items: center;
  gap: 2px;
  box-sizing: border-box;
  width: 10px;
  height: 58px;
  padding-bottom: 2px;
  border: 1px solid #c9ced6;
  border-radius: 4px;
  background: #263147;
}

.side-meter i {
  width: 6px;
  height: 1px;
  background: #4fd473;
}

/* taskbar */
.taskbar {
  display: flex;
  align-items: center;
  height: 40px;
  padding-right: 9px;
  background: #00494c;
  color: #fff;
}

.start {
  display: flex;
  align-items: center;
  justify-content: center;
  width: 48px;
  height: 40px;
}

.search {
  display: flex;
  align-items: center;
  gap: 10px;
  width: 344px;
  height: 40px;
  margin-right: 3px;
  padding: 0 12px;
  background: #f1f4f5;
}

.search input {
  flex: 1;
  height: 24px;
  font-size: 14px;
  color: #222;
}

.search input::placeholder {
  color: #222;
  opacity: 1;
}

.task {
  display: flex;
  align-items: center;
  justify-content: center;
  width: 48px;
  height: 40px;
  margin-right: 1px;
  background: linear-gradient(#76e2e8, #76e2e8) bottom / 40px 2px no-repeat;
}

.task.current {
  background: linear-gradient(#76e2e8, #76e2e8) bottom / 48px 2px no-repeat #00797d;
}

.tray {
  display: flex;
  align-items: center;
  gap: 8px;
  margin-left: auto;
}

.ime {
  width: 16px;
  font-size: 14px;
}

.clock {
  display: flex;
  flex-direction: column;
  align-items: center;
  width: 66px;
  margin-left: 16px;
  line-height: 19px;
}

.tray,
.clock {
  position: relative;
  z-index: 2;
}

.watermark {
  position: absolute;
  z-index: 1;
  right: 0;
  bottom: 5px;
  display: flex;
  width: 211px;
  height: 63px;
  overflow: hidden;
  background: rgba(255, 255, 255, 0.38);
  pointer-events: none;
}

.watermark svg {
  flex: none;
  opacity: 0.8;
}

.watermark-text {
  display: flex;
  flex-direction: column;
  margin-left: 8px;
}

.watermark b {
  font-size: 30px;
  line-height: 40px;
  color: rgba(38, 145, 100, 0.6);
}

.watermark span {
  font-size: 14px;
  line-height: 18px;
  color: rgba(30, 100, 100, 0.5);
}
</style>
